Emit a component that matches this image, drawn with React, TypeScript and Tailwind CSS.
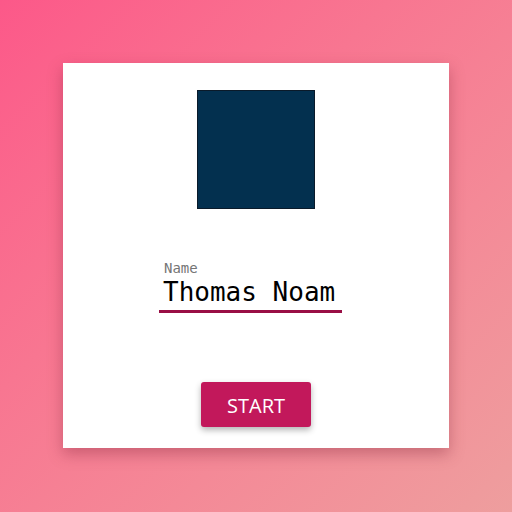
export default function App() {
    return (
        <div className="h-[512px] w-[512px] overflow-hidden bg-gradient-to-br from-[#fc5889] to-[#ee9e9e] pt-[63px]">
            <div className="ml-[63px] flex h-[385px] w-[386px] flex-col bg-white shadow-[0_6px_14px_rgba(120,30,50,0.35)]">
                <div className="mx-auto mt-[27px] h-[119px] w-[118px] border border-[#0a1a2a] bg-[#03304f]" />
                <div className="ml-[96px] mt-[51px] w-[183px]">
                    <div className="pl-[5px] font-['DejaVu_Sans_Mono',monospace] text-[14px] leading-[17px] text-[#757575]">
                        Name
                    </div>
                    <div className="pl-[4px] font-['DejaVu_Sans_Mono',monospace] text-[26px] leading-[30px] text-black">
                        Thomas Noam
                    </div>
                    <div className="mt-[3px] h-[3px] bg-[#990f45]" />
                </div>
                <button className="mx-auto mt-[69px] h-[45px] w-[110px] rounded-[3px] bg-[#c2185b] pt-[2px] font-['Open_Sans',sans-serif] text-[20px] text-white shadow-[0_3px_6px_rgba(0,0,0,0.3)]">
                    START
                </button>
            </div>
        </div>
    )
}
